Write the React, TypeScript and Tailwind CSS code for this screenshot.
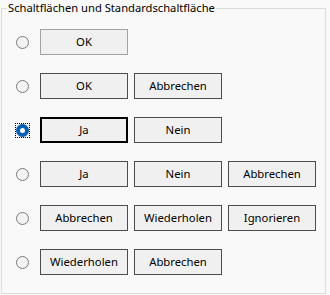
import React from 'react'

type Row = { buttons: string[]; selected?: boolean; defaultIdx?: number; soft?: boolean }

const ROWS: Row[] = [
  { buttons: ['OK'], soft: true },
  { buttons: ['OK', 'Abbrechen'] },
  { buttons: ['Ja', 'Nein'], selected: true, defaultIdx: 0 },
  { buttons: ['Ja', 'Nein', 'Abbrechen'] },
  { buttons: ['Abbrechen', 'Wiederholen', 'Ignorieren'] },
  { buttons: ['Wiederholen', 'Abbrechen'] },
]

function Radio({ checked }: { checked?: boolean }) {
  if (checked) {
    return (
      <div className="w-[13px] h-[13px] outline outline-1 outline-dotted outline-black flex items-center justify-center">
        <div className="w-[13px] h-[13px] rounded-full bg-[#005fb8] flex items-center justify-center">
          <div className="w-[5px] h-[5px] rounded-full bg-white" />
        </div>
      </div>
    )
  }
  return <div className="w-[13px] h-[13px] rounded-full border border-[#7a7a7a] bg-[#f3f3f3]" />
}

export default function App() {
  return (
    <div
      className="w-[330px] h-[295px] bg-[#f9f9f9] text-black text-[11.3px]"
      style={{ fontFamily: '"Noto Sans", Arial, sans-serif' }}
    >
      <fieldset className="ml-[1px] w-[325px] h-[294px] border border-[#dcdcdc] pt-[13px]">
        <legend className="ml-[5px] px-[1px] leading-[16px] text-[11.2px]">Schaltflächen und Standardschaltfläche</legend>
        <div className="flex flex-col gap-[18px] pl-[14px]">
          {ROWS.map((row, i) => (
            <div key={i} className="flex items-center h-[26px]">
              <Radio checked={row.selected} />
              <div className="flex gap-[6px] ml-[11px]">
                {row.buttons.map((b, j) => (
                  <button
                    key={j}
                    className={
                      'w-[88px] h-[26px] bg-[#f0f0f0] leading-none ' +
                      (row.defaultIdx === j
                        ? 'border-2 border-black'
                        : row.soft
                        ? 'border border-[#a3a3a3]'
                        : 'border border-[#4d4d4d]')
                    }
                  >
                    {b}
                  </button>
                ))}
              </div>
            </div>
          ))}
        </div>
      </fieldset>
    </div>
  )
}
